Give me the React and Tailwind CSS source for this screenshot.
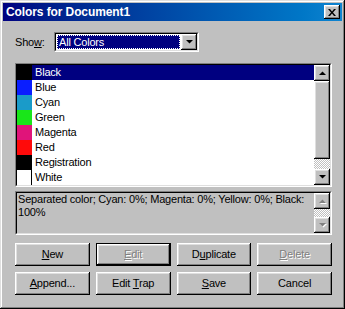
import React from 'react';

const raised =
  'bg-[#c0c0c0] shadow-[inset_-1px_-1px_#000,inset_1px_1px_#fff,inset_-2px_-2px_#808080,inset_2px_2px_#dfdfdf]';
const checker =
  'bg-[image:repeating-conic-gradient(#fff_0%_25%,#c0c0c0_0%_50%)] bg-[length:2px_2px]';

function Arrow({ up, disabled }) {
  return (
    <svg width="7" height="4" viewBox="0 0 7 4" className="overflow-visible">
      {disabled && (
        <path d={up ? 'M1 5h7L4.5 1.5z' : 'M1 1h7L4.5 4.5z'} fill="#fff" />
      )}
      <path d={up ? 'M0 4h7L3.5 0.5z' : 'M0 0h7L3.5 3.5z'} fill={disabled ? '#808080' : '#000'} />
    </svg>
  );
}

function ScrollBtn({ up, disabled }) {
  return (
    <div className={`w-[16px] h-[16px] flex items-center justify-center shrink-0 ${raised}`}>
      <Arrow up={up} disabled={disabled} />
    </div>
  );
}

function Sunken({ className = '', inner = '', children }) {
  return (
    <div className={`border border-t-[#808080] border-l-[#808080] border-b-white border-r-white ${className}`}>
      <div className={`h-full border border-t-black border-l-black border-b-[#dfdfdf] border-r-[#dfdfdf] ${inner}`}>
        {children}
      </div>
    </div>
  );
}

function Label({ text, u }) {
  if (u < 0) return text;
  return (
    <>
      {text.slice(0, u)}
      <span className="underline underline-offset-[1px]">{text[u]}</span>
      {text.slice(u + 1)}
    </>
  );
}

function Button({ text, u = -1, disabled, isDefault }) {
  const inner = (
    <div className={`h-full flex items-center justify-center ${raised}`}>
      <span className={disabled ? 'text-[#808080] [text-shadow:1px_1px_#fff]' : 'text-black'}>
        <Label text={text} u={u} />
      </span>
    </div>
  );
  if (isDefault) {
    return <div className="h-[23px] border border-black">{inner}</div>;
  }
  return <div className="h-[23px]">{inner}</div>;
}

const colors = [
  { name: 'Black', c: 'bg-[#000]' },
  { name: 'Blue', c: 'bg-[#0a1eff]' },
  { name: 'Cyan', c: 'bg-[#1a9bc9]' },
  { name: 'Green', c: 'bg-[#19e619]' },
  { name: 'Magenta', c: 'bg-[#e0147a]' },
  { name: 'Red', c: 'bg-[#ff0a0a]' },
  { name: 'Registration', c: 'bg-[#000]' },
  { name: 'White', c: 'bg-white border-r border-black' },
];

export default function App() {
  return (
    <div className="w-[345px] h-[309px] p-[3px] bg-[#c0c0c0] shadow-[inset_-1px_-1px_#000,inset_1px_1px_#dfdfdf,inset_-2px_-2px_#808080,inset_2px_2px_#fff] font-['Liberation_Sans',Arial,sans-serif] text-[11px] tracking-[-0.2px] text-black leading-[13px] select-none">
      {/* Title bar */}
      <div className="h-[18px] flex items-center justify-between bg-linear-to-r from-[#000080] to-[#1084d0] pl-[3px] pr-[2px]">
        <span className="text-white font-bold text-[12px] tracking-[-0.1px]">Colors for Document1</span>
        <div className={`w-[16px] h-[14px] flex items-center justify-center ${raised}`}>
          <svg width="8" height="7" viewBox="0 0 8 7">
            <path d="M0 0h2l2 2.5L6 0h2L5 3.5 8 7H6L4 4.5 2 7H0l3-3.5z" fill="#000" />
          </svg>
        </div>
      </div>

      <div className="pl-[12px] w-[329px]">
        {/* Show row */}
        <div className="mt-[11px] h-[20px] flex items-center">
          <span className="w-[39px]">
            Sho<span className="underline underline-offset-[1px]">w</span>:
          </span>
          <Sunken className="w-[145px] h-[20px]" inner="flex bg-white">
            <div className="flex-1 m-[1px] bg-[#000080] border border-dotted border-white text-white pl-[1px] flex items-center">
              All Colors
            </div>
            <ScrollBtn />
          </Sunken>
        </div>

        {/* Color list */}
        <Sunken className="mt-[11px] w-[317px] h-[124px]" inner="flex bg-white">
          <div className="flex-1 flex flex-col">
            {colors.map((col, i) => (
              <div key={col.name} className="h-[15px] flex">
                <div className={`w-[15px] h-full ${col.c}`} />
                <div className={`flex-1 pl-[3px] flex items-center ${i === 0 ? 'bg-[#000080] text-white' : ''}`}>
                  {col.name}
                </div>
              </div>
            ))}
          </div>
          <div className="w-[16px] flex flex-col">
            <ScrollBtn up />
            <div className={`h-[78px] ${raised}`} />
            <div className={`flex-1 ${checker}`} />
            <ScrollBtn />
          </div>
        </Sunken>

        {/* Description */}
        <Sunken className="mt-[4px] w-[317px] h-[44px]" inner="flex bg-[#c0c0c0]">
          <div className="flex-1 pl-[1px] pr-[4px]">
            Separated color; Cyan: 0%; Magenta: 0%; Yellow: 0%; Black: 100%
          </div>
          <div className="w-[16px] flex flex-col">
            <ScrollBtn up disabled />
            <div className={`flex-1 ${checker}`} />
            <ScrollBtn disabled />
          </div>
        </Sunken>

        {/* Buttons */}
        <div className="mt-[8px] w-[317px] grid grid-cols-4 gap-x-[6px] gap-y-[6px]">
          <Button text="New" u={0} />
          <Button text="Edit" u={0} disabled isDefault />
          <Button text="Duplicate" u={1} />
          <Button text="Delete" u={0} disabled />
          <Button text="Append..." u={0} />
          <Button text="Edit Trap" u={5} />
          <Button text="Save" u={0} />
          <Button text="Cancel" />
        </div>
      </div>
    </div>
  );
}
